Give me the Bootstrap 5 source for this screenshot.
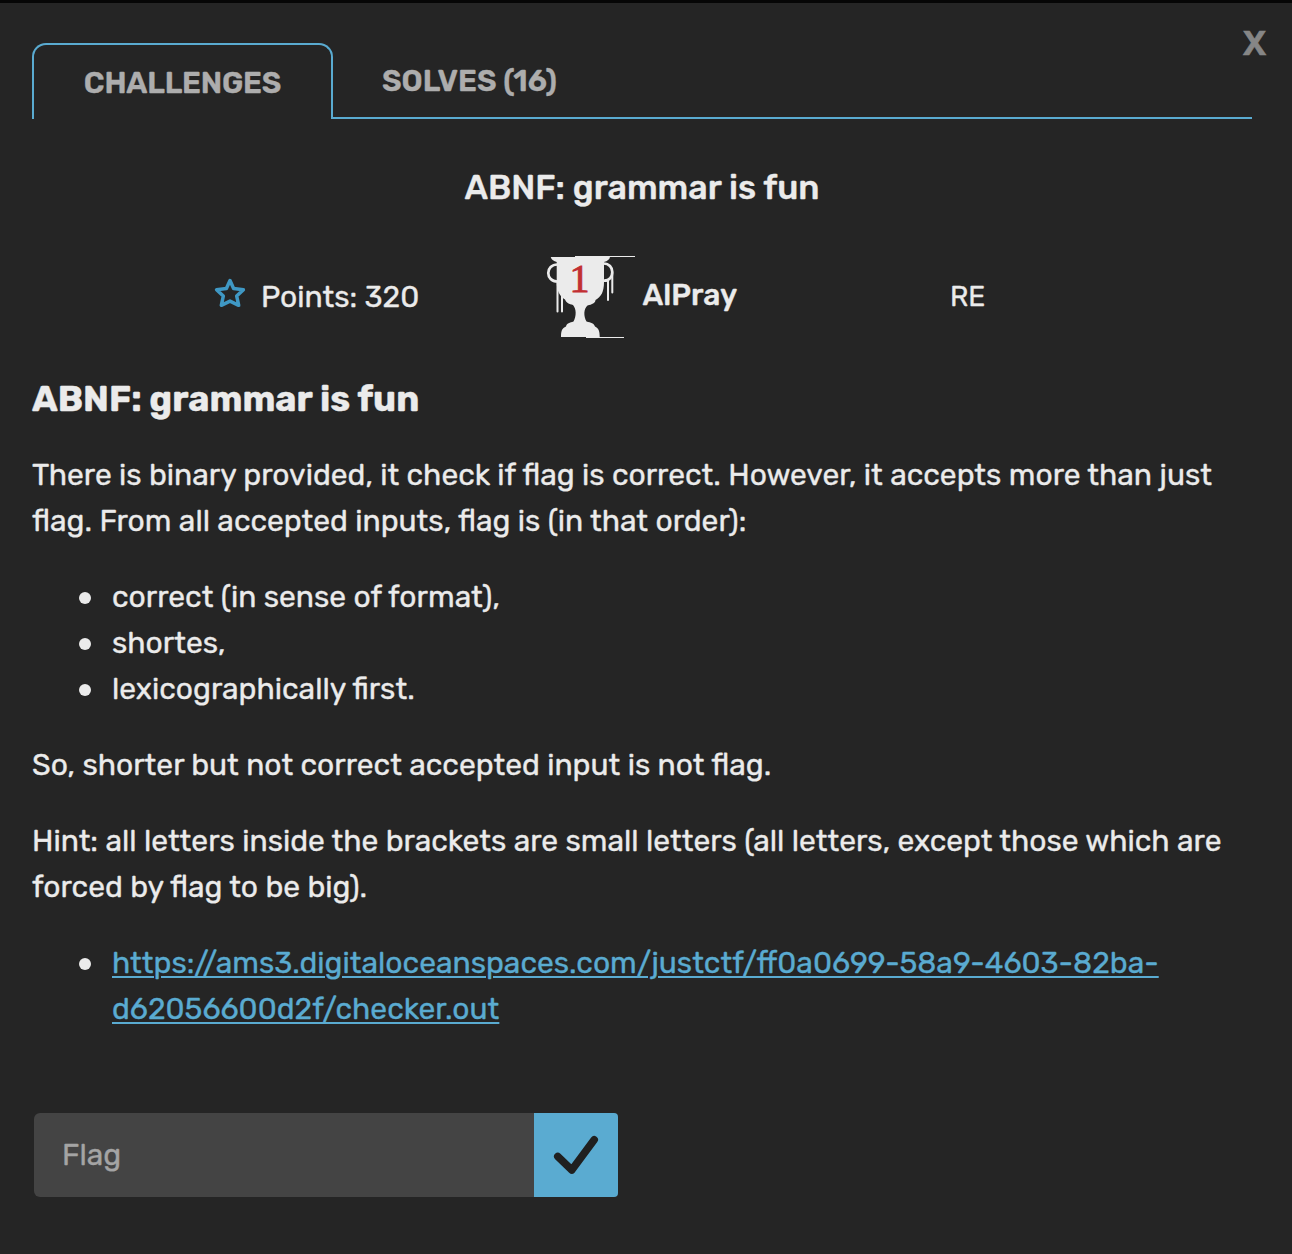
<!DOCTYPE html>
<html lang="en">
<head>
<meta charset="utf-8">
<title>ABNF: grammar is fun</title>
<link href="https://cdn.jsdelivr.net/npm/bootstrap@5.3.0/dist/css/bootstrap.min.css" rel="stylesheet">
<style>
body{background:#252525;color:#ebebeb;font-family:Rubik,Roboto,sans-serif;font-size:30px;line-height:46px;-webkit-text-stroke:.35px}
.panel{height:1254px;border-top:3px solid #060606;padding:40px 40px 0 32px;overflow:hidden}
.tabs{height:76px}
.tab{font-weight:600;line-height:36px;color:#adadad}
.tab-on{width:301px;border:2px solid #5aabd1;border-bottom:0;border-radius:14px 14px 0 0;padding-top:20px;letter-spacing:-.2px}
.tab-off{border-bottom:2px solid #5aabd1;padding:20px 0 0 49px}
.closer{top:16px;right:27px;width:22px;color:#868686;font:700 34.5px/46px "Noto Sans","Open Sans",sans-serif;-webkit-text-stroke:.6px}
.ttl{font-size:34px;font-weight:500;margin-top:48px}
.facts{height:84px;margin-top:45px}
.points{width:329px;padding-left:182px}
.points svg{margin-bottom:5px}
.points .txt{margin-left:15px}
.solver{width:360px;padding-left:185px}
.solver svg{margin-top:2px}
.solver .txt{margin:0 0 4px 6.5px;font-weight:500}
.category{margin-left:229px;font-size:28px}
.facts svg{flex:none}
.desc-h{font-size:36px;font-weight:700;line-height:46px;margin:37px 0 30px}
.desc p,.desc ul{margin-bottom:30px}
.desc ul{padding-left:80px;list-style:none}
.desc li{position:relative}
.desc li::before{content:"";position:absolute;left:-33px;top:18px;width:12px;height:12px;border-radius:50%;background:#ebebeb}
.desc a{color:#5aabd1;text-decoration-thickness:2px;text-underline-offset:3px}
.flagbox{width:584px;height:84px;margin:81px 0 0 2px}
.flagbox .form-control{background:#444;border:0;border-radius:6px 0 0 6px;color:#ebebeb;font-size:30px;padding:2px 28px 0}
.flagbox .form-control::placeholder{color:#a4a4a4;opacity:1}
.flagbox .btn{width:84px;background:#5aabd1;border:0;border-radius:0 4px 4px 0;padding:0}
.flagbox svg{flex:none}
</style>
</head>
<body>
<main class="panel position-relative">
  <button class="closer position-absolute btn p-0 border-0">X</button>
  <nav class="tabs d-flex">
    <div class="tab tab-on text-center">CHALLENGES</div>
    <div class="tab tab-off flex-grow-1">SOLVES (16)</div>
  </nav>
  <h1 class="ttl text-center mb-0 lh-sm">ABNF: grammar is fun</h1>
  <div class="facts d-flex align-items-center">
    <div class="points d-flex align-items-center text-nowrap">
      <svg width="32" height="32" viewBox="0 0 32 32"><path d="M16 2.500l3.600 8 9.800 1.200-6.700 6.400 2 9.200L16 23.100l-8.700 4.200 2-9.200-6.700-6.400 9.800-1.200z" fill="none" stroke="#3f98c4" stroke-width="3.500" stroke-linejoin="round"/></svg>
      <span class="txt">Points: 320</span>
    </div>
    <div class="solver d-flex align-items-center">
      <svg width="90" height="84" viewBox="0 0 90 84">
        <path fill="#ebebeb" d="M4.700 1H29V0H89V1H64C63.500 3.500 61.500 5 58 6V26C58 36 55 41 49.500 44C49.500 47 46 48.500 41.500 49.500C37.500 53 37.500 60 40.500 65.500C45 66.500 48 67.500 49 70.500C52.500 72 53.700 75 53.700 81H78V82H40V81H15C15 75 16 72 20 70.500C20.500 67.500 24 66.500 27.500 65.500C30.500 60 30.500 53 27 49C23 48 20.500 47 19 43.500C14 40.500 10.700 35 10.700 26V6C8 5 5.500 4 4.700 1Z"/>
        <path d="M12 8.500C-1 8-1 26 12 25.500M57 7.500C69.500 7 69 25 58 24.700" fill="none" stroke="#ebebeb" stroke-width="2.700"/>
        <path d="M11.500 25v30.500M16 36v19.500M62 24v20M66.300 17v19.500" fill="none" stroke="#ebebeb" stroke-width="2" stroke-linecap="round"/>
        <text x="33.500" y="36" text-anchor="middle" font-family="Liberation Serif,serif" font-size="40" fill="#c22f33" stroke="#c22f33" stroke-width=".9">1</text>
      </svg>
      <strong class="txt">AlPray</strong>
    </div>
    <div class="category">RE</div>
  </div>
  <article class="desc">
    <h2 class="desc-h">ABNF: grammar is fun</h2>
    <p>There is binary provided, it check if flag is correct. However, it accepts more than just flag. From all accepted inputs, flag is (in that order):</p>
    <ul>
      <li>correct (in sense of format),</li>
      <li>shortes,</li>
      <li>lexicographically first.</li>
    </ul>
    <p>So, shorter but not correct accepted input is not flag.</p>
    <p>Hint: all letters inside the brackets are small letters (all letters, except those which are forced by flag to be big).</p>
    <ul class="mb-0"><li><a href="#">https://ams3.digitaloceanspaces.com/justctf/ff0a0699-58a9-4603-82ba-<br>d62056600d2f/checker.out</a></li></ul>
  </article>
  <form class="flagbox input-group flex-nowrap">
    <input class="form-control" placeholder="Flag" aria-label="Flag">
    <button class="btn d-flex align-items-center justify-content-center" type="button" aria-label="Submit"><svg width="50" height="50" viewBox="0 0 50 50"><path d="M6.800 26.500L20.800 40 43.200 9.800" fill="none" stroke="#202020" stroke-width="7.600" stroke-linecap="round" stroke-linejoin="round"/></svg></button>
  </form>
</main>
<script src="https://cdn.jsdelivr.net/npm/bootstrap@5.3.0/dist/js/bootstrap.bundle.min.js"></script>
</body>
</html>
